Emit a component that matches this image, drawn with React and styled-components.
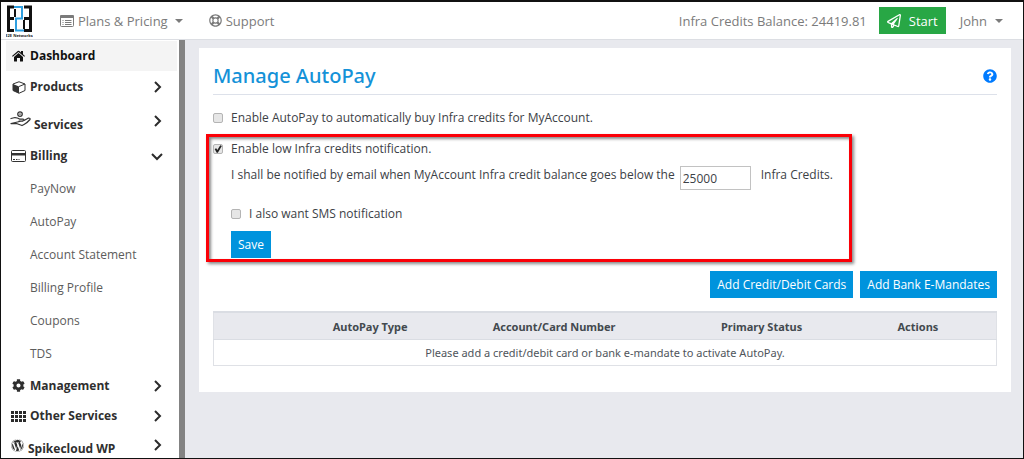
import React from "react";
import styled, { createGlobalStyle } from "styled-components";
import { FaRegLifeRing, FaRegPaperPlane, FaWordpress, FaQuestionCircle, FaCog } from "react-icons/fa";

const GlobalStyle = createGlobalStyle`
  *, *::before, *::after { box-sizing: border-box; }
  body {
    margin: 0;
    background: #e8e9ee;
    color: #3c4146;
    font: 12px/18px "Open Sans", "Noto Sans", sans-serif;
  }
  button, input { font: inherit; color: inherit; border-radius: 0; }
  a { color: inherit; text-decoration: none; }
  svg { display: block; flex: none; }
`;

const Page = styled.div`
  min-height: 100vh;
  display: flex;
  flex-direction: column;
  border: 1px solid #111;
  border-top-width: 2px;
`;

const Header = styled.header`
  height: 38px;
  display: flex;
  align-items: center;
  padding: 0 20px 0 5px;
  background: #fff;
  border-bottom: 1px solid #dcdee3;
  color: #7b7b7b;
  font-size: 13px;
`;

const Brand = styled.a`
  width: 27px;
  margin-right: 27px;
`;

const TopLink = styled.a`
  display: flex;
  align-items: center;
  gap: 4px;
  margin-right: 26px;
`;

const Balance = styled.span`
  margin-left: auto;
  margin-right: 12px;
`;

const StartButton = styled.button`
  display: flex;
  align-items: center;
  gap: 8px;
  height: 27px;
  padding: 0 8px;
  border: 0;
  background: #28a745;
  color: #fff;
`;

const UserButton = styled.button`
  display: flex;
  align-items: center;
  gap: 8px;
  margin-left: 14px;
  padding: 0;
  border: 0;
  background: none;
`;

const Caret = styled.span`
  margin-left: ${(p) => (p.$spaced ? "3px" : "0")};
  border: 4px solid transparent;
  border-top-color: currentColor;
  border-bottom-width: 0;
`;

const Body = styled.div`
  flex: 1;
  display: flex;
`;

const Sidebar = styled.nav`
  flex: none;
  width: 184px;
  padding: 1px 2px 0 5px;
  background: #fff;
  border-right: 6px solid #838383;
`;

const NavItem = styled.a`
  display: flex;
  align-items: ${(p) => p.$align || "center"};
  height: ${(p) => p.$height || 30}px;
  padding: 0 14px 0 5px;
  background: ${(p) => (p.$active ? "#f4f4f4" : "none")};
  color: ${(p) => (p.$active ? "#111" : "#2f2f2f")};
  font-weight: 700;
`;

const NavIcon = styled.span`
  display: flex;
  justify-content: center;
  align-self: ${(p) => (p.$raised ? "flex-start" : "center")};
  padding-top: ${(p) => (p.$raised ? "8px" : "0")};
  width: ${(p) => p.$width || 15}px;
  margin-right: 4px;
`;

const NavLabel = styled.span`
  padding-bottom: ${(p) => (p.$lifted ? "5px" : "0")};
`;

const NavChevron = styled.span`
  margin-left: auto;
  align-self: center;
`;

const SubItem = styled.a`
  display: flex;
  align-items: center;
  height: 33px;
  padding-left: 24px;
  color: #5c5c5c;
`;

const Main = styled.main`
  flex: 1;
  min-width: 0;
  padding: 8px 12px 24px 14px;
`;

const Card = styled.section`
  background: #fff;
  padding: 14px 7px 26px;
`;

const Inset = styled.div`
  margin: 0 7px;
`;

const TitleRow = styled(Inset)`
  display: flex;
  align-items: center;
  justify-content: space-between;
  height: 33px;
  padding-bottom: 4px;
  border-bottom: 1px solid #dde1ea;
`;

const Title = styled.h1`
  margin: 0;
  color: #1492d8;
  font-family: "Noto Sans", "Open Sans", sans-serif;
  font-size: 20px;
  line-height: 28px;
  font-weight: 500;
`;

const HelpButton = styled.button`
  padding: 0;
  border: 0;
  background: none;
  color: #007bff;
`;

const CheckLabel = styled.label`
  display: flex;
  align-items: center;
  gap: 8px;
`;

const Checkbox = styled.input.attrs({ type: "checkbox" })`
  appearance: none;
  width: 10px;
  height: 10px;
  margin: 0;
  border: 1px solid #b4b4b4;
  border-radius: 2px;
  background: #e6e6e6;
  &:checked::after {
    content: "";
    display: block;
    height: 8px;
    background: #222;
    clip-path: polygon(8% 50%, 28% 42%, 42% 62%, 78% 4%, 98% 14%, 48% 96%, 34% 96%);
  }
`;

const AutoPayOption = styled(Inset)`
  padding: 14px 0 7px;
`;

const Highlight = styled.div`
  width: 81%;
  padding: 3px 4px 1px;
  border: 3px solid #fb0007;
  box-shadow: 2px 2px 3px #8a8a8a, inset 2px 2px 3px #8a8a8a;
`;

const Indent = styled.div`
  padding-left: 18px;
`;

const Threshold = styled.div`
  display: flex;
  align-items: flex-start;
  gap: 5px;
  padding: 8px 0 15px;
`;

const AmountInput = styled.input`
  width: 71px;
  height: 24px;
  margin-right: 5px;
  padding: 1px 2px 0;
  border: 1px solid #c2c2c2;
  background: #fff;
`;

const BlueButton = styled.button`
  height: 27px;
  margin: 0;
  padding: 0 7px;
  border: 0;
  background: #0093dd;
  color: #fff;
`;

const SaveRow = styled.div`
  padding-top: 8px;
`;

const Actions = styled(Inset)`
  display: flex;
  justify-content: flex-end;
  gap: 7px;
  padding: 9px 0 13px;
`;

const TableWrap = styled(Inset)``;

const Table = styled.table`
  width: 100%;
  table-layout: fixed;
  border-collapse: collapse;
  border: 1px solid #dfe1e6;
  color: #4f555b;
  text-align: center;
  font-family: "Noto Sans", "Open Sans", sans-serif;
  font-size: 11px;
  line-height: 17px;
  th {
    padding: 5px 0 4px;
    border-top: 2px solid #dadde3;
    border-bottom: 1px solid #dadde3;
    background: #e8e9ee;
    color: #43494f;
  }
  td { padding: 4px 0; }
`;

const Col = styled.col`
  width: ${(p) => p.$share}%;
`;

function Chevron({ down }) {
  return (
    <svg width="12" height="12" viewBox="0 0 12 12" fill="none" stroke="#2b2b2b" strokeWidth="2">
      <path d={down ? "M1 4l5 5 5-5" : "M4 1l5 5-5 5"} />
    </svg>
  );
}

function Logo() {
  return (
    <svg width="27" height="34" viewBox="0 0 27 34">
      <g fill="none">
        <path stroke="#111" strokeWidth="3" d="M8 3H2.500V26.500H8M18 3H24.500V26.500H18M2 14.500H8M18 14.500H25" />
        <path stroke="#111" strokeWidth="2" d="M9 5V13M18 16V25" />
        <path stroke="#2f9fe0" strokeWidth="2" d="M8 3H16V14.500H10V26.500H18" />
      </g>
      <text x="13" y="33" textAnchor="middle" fontSize="4" fontWeight="700" fill="#222">E2E Networks</text>
    </svg>
  );
}

const ListIcon = () => (
  <svg width="14" height="12" viewBox="0 0 14 12" fill="none" stroke="currentColor">
    <path d="M.500 1.500v9q0 1 1 1h11q1 0 1-1v-9M2.500 5.500h1M5 5.500h6.500M2.500 7.500h1M5 7.500h6.500M2.500 9.500h1M5 9.500h6.500" />
    <path d="M1 0h12q1 0 1 1v2H0V1q0-1 1-1z" fill="currentColor" stroke="none" />
  </svg>
);

const HomeIcon = () => (
  <svg width="13" height="12" viewBox="0 0 26 24" fill="#111">
    <path d="M13 6l9 8v8q0 1-1 1h-5v-7h-6v7H5q-1 0-1-1v-8z" />
    <path d="M0 12L11.500 2q1.500-1.200 3 0L18 5V2h4v6.500l4 3.500-1.500 1.700L13 4 1.500 13.700z" />
  </svg>
);

const CubeIcon = () => (
  <svg width="14" height="13" viewBox="0 0 28 26">
    <path d="M14 1.500L26 6v13l-12 5.500L2 19V6z" fill="#fff" stroke="#333" strokeWidth="2" strokeLinejoin="round" />
    <path d="M2 6l12 5v13.500L2 19z" fill="#333" />
    <path d="M14 11l12-5" stroke="#333" strokeWidth="2" />
  </svg>
);

const ServicesIcon = () => (
  <svg width="21" height="16" viewBox="0 0 42 32" fill="none" stroke="#333" strokeWidth="2.500" strokeLinejoin="round" strokeLinecap="round">
    <circle cx="20" cy="6" r="4.500" />
    <path d="M20 5.500v1M2 15l8-2q5 0 9 3h7q4 2 0 4h-8M28 19l9-5q4 0 3 3-6 7-12 10l-4 2-11-4H2z" />
  </svg>
);

const CardIcon = () => (
  <svg width="15" height="12" viewBox="0 0 30 24">
    <rect x="1" y="1" width="28" height="22" rx="2" fill="#fff" stroke="#333" strokeWidth="2" />
    <path d="M1 6h28v5H1z" fill="#333" />
    <path d="M4 19h4M10 19h3M15 19h2" stroke="#333" strokeWidth="2" />
  </svg>
);

const GridIcon = () => (
  <svg width="15" height="11" viewBox="0 0 15 11" fill="#2b2b2b">
    {[0, 4, 8].map((y) => [0, 4, 8, 12].map((x) => <rect key={`${x}-${y}`} x={x} y={y} width="3" height="3" />))}
  </svg>
);

const billingLinks = ["PayNow", "AutoPay", "Account Statement", "Billing Profile", "Coupons", "TDS"];

function NavEntry({ icon, label, height, active, align, raised, lifted, iconWidth, arrow }) {
  return (
    <NavItem href="#" $height={height} $active={active} $align={align}>
      <NavIcon $raised={raised} $width={iconWidth}>{icon}</NavIcon>
      <NavLabel $lifted={lifted}>{label}</NavLabel>
      {arrow && <NavChevron><Chevron down={arrow === "down"} /></NavChevron>}
    </NavItem>
  );
}

export default function App() {
  return (
    <Page>
      <GlobalStyle />
      <Header>
        <Brand href="#" aria-label="E2E Networks"><Logo /></Brand>
        <TopLink href="#"><ListIcon />Plans &amp; Pricing<Caret $spaced /></TopLink>
        <TopLink href="#"><FaRegLifeRing size={13} />Support</TopLink>
        <Balance>Infra Credits Balance: 24419.81</Balance>
        <StartButton><FaRegPaperPlane size={14} />Start</StartButton>
        <UserButton>John<Caret /></UserButton>
      </Header>
      <Body>
        <Sidebar>
          <NavEntry icon={<HomeIcon />} label="Dashboard" active />
          <NavEntry icon={<CubeIcon />} label="Products" height={32} arrow="right" />
          <NavEntry icon={<ServicesIcon />} label="Services" height={36} align="flex-end" raised lifted iconWidth={19} arrow="right" />
          <NavEntry icon={<CardIcon />} label="Billing" height={33} arrow="down" />
          {billingLinks.map((label) => <SubItem href="#" key={label}>{label}</SubItem>)}
          <NavEntry icon={<FaCog size={13} />} label="Management" height={31} arrow="right" />
          <NavEntry icon={<GridIcon />} label="Other Services" arrow="right" />
          <NavEntry icon={<FaWordpress size={13} />} label="Spikecloud WP" height={27} align="flex-end" raised iconWidth={13} arrow="right" />
        </Sidebar>
        <Main>
          <Card>
            <TitleRow>
              <Title>Manage AutoPay</Title>
              <HelpButton aria-label="Help"><FaQuestionCircle size={14} /></HelpButton>
            </TitleRow>
            <AutoPayOption>
              <CheckLabel><Checkbox />Enable AutoPay to automatically buy Infra credits for MyAccount.</CheckLabel>
            </AutoPayOption>
            <Highlight>
              <CheckLabel><Checkbox defaultChecked />Enable low Infra credits notification.</CheckLabel>
              <Indent>
                <Threshold>
                  <label htmlFor="threshold">I shall be notified by email when MyAccount Infra credit balance goes below the</label>
                  <AmountInput id="threshold" defaultValue="25000" />
                  <span>Infra Credits.</span>
                </Threshold>
                <CheckLabel><Checkbox />I also want SMS notification</CheckLabel>
                <SaveRow><BlueButton>Save</BlueButton></SaveRow>
              </Indent>
            </Highlight>
            <Actions>
              <BlueButton>Add Credit/Debit Cards</BlueButton>
              <BlueButton>Add Bank E-Mandates</BlueButton>
            </Actions>
            <TableWrap>
              <Table>
                <colgroup>
                  <Col $share={13} /><Col $share={14} /><Col $share={33} /><Col $share={20} /><Col $share={20} />
                </colgroup>
                <thead>
                  <tr>
                    <th aria-label="Select" />
                    <th>AutoPay Type</th>
                    <th>Account/Card Number</th>
                    <th>Primary Status</th>
                    <th>Actions</th>
                  </tr>
                </thead>
                <tbody>
                  <tr><td colSpan={5}>Please add a credit/debit card or bank e-mandate to activate AutoPay.</td></tr>
                </tbody>
              </Table>
            </TableWrap>
          </Card>
        </Main>
      </Body>
    </Page>
  );
}
